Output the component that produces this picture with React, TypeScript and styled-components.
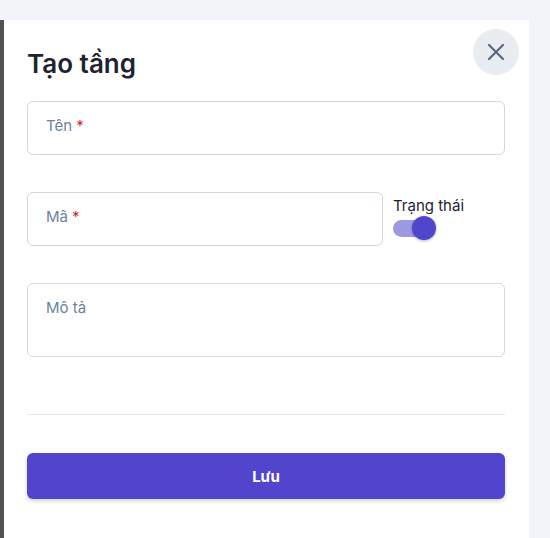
import React, { useState } from "react";
import styled, { createGlobalStyle } from "styled-components";

const GlobalStyle = createGlobalStyle`
  html, body {
    margin: 0;
    padding: 0;
    background: #f0f3f8;
    font-family: Inter, "Noto Sans", "Liberation Sans", sans-serif;
  }
`;

const Page = styled.div`
  display: flex;
  padding-top: 20px;
  height: 518px;
  overflow: hidden;
`;

const Backdrop = styled.div`
  width: 4px;
  flex-shrink: 0;
  background: #525252;
`;

const Panel = styled.div`
  position: relative;
  width: 525px;
  flex-shrink: 0;
  background: #ffffff;
  box-sizing: border-box;
  padding: 0 24px 0 23px;
`;

const Title = styled.h2`
  margin: 0;
  padding-top: 28px;
  font-size: 26px;
  line-height: 32px;
  font-weight: 600;
  color: #1d2333;
`;

const CloseButton = styled.button`
  position: absolute;
  top: 9px;
  right: 10px;
  width: 46px;
  height: 46px;
  border: none;
  border-radius: 50%;
  background: #e9edf2;
  display: flex;
  align-items: center;
  justify-content: center;
  padding: 0;
  cursor: pointer;
`;

const Form = styled.div`
  display: flex;
  flex-direction: column;
  margin-top: 21px;
`;

const Row = styled.div<{ $gap?: number }>`
  display: flex;
  align-items: flex-start;
  gap: 10px;
  margin-bottom: ${(p) => p.$gap ?? 37}px;
`;

const Field = styled.div<{ $height: number }>`
  flex: 1;
  height: ${(p) => p.$height}px;
  box-sizing: border-box;
  border: 1px solid #cfd8e3;
  border-radius: 6px;
  padding: 13px 18px 0;
`;

const Label = styled.span`
  font-size: 15px;
  line-height: 20px;
  color: #6a83a3;
`;

const Required = styled.span`
  color: #e02424;
  margin-left: 4px;
  font-weight: 400;
`;

const StatusBox = styled.div`
  width: 112px;
  display: flex;
  flex-direction: column;
  padding-top: 4px;
`;

const StatusLabel = styled.span`
  font-size: 15px;
  line-height: 20px;
  color: #1d2333;
`;

const Track = styled.div<{ $on: boolean }>`
  position: relative;
  width: 40px;
  height: 17px;
  margin-top: 4px;
  border-radius: 9px;
  background: ${(p) => (p.$on ? "#9f99e3" : "#cbd5e1")};
  cursor: pointer;
`;

const Knob = styled.div<{ $on: boolean }>`
  position: absolute;
  top: -4px;
  left: ${(p) => (p.$on ? "19px" : "-2px")};
  width: 24px;
  height: 24px;
  border-radius: 50%;
  background: ${(p) => (p.$on ? "#5046cd" : "#f8fafc")};
  box-shadow: 0 1px 3px rgba(0, 0, 0, 0.3);
`;

const Divider = styled.hr`
  margin: 57px 0 38px;
  border: none;
  border-top: 1px solid #e2e8f0;
`;

const SaveButton = styled.button`
  height: 46px;
  border: none;
  border-radius: 6px;
  background: #5145cd;
  color: #ffffff;
  font-family: inherit;
  font-size: 15px;
  font-weight: 700;
  box-shadow: 0 2px 4px rgba(0, 0, 0, 0.18);
  cursor: pointer;
`;

const App = () => {
  const [active, setActive] = useState(true);
  return (
    <>
      <GlobalStyle />
      <Page>
        <Backdrop />
        <Panel>
          <Title>Tạo tầng</Title>
          <CloseButton aria-label="Đóng">
            <svg width="20" height="20" viewBox="0 0 20 20" fill="none">
              <path
                d="M3 3L17 17M17 3L3 17"
                stroke="#5b6883"
                strokeWidth="2.2"
                strokeLinecap="round"
              />
            </svg>
          </CloseButton>
          <Form>
            <Row>
              <Field $height={54}>
                <Label>
                  Tên<Required>*</Required>
                </Label>
              </Field>
            </Row>
            <Row>
              <Field $height={54}>
                <Label>
                  Mã<Required>*</Required>
                </Label>
              </Field>
              <StatusBox>
                <StatusLabel>Trạng thái</StatusLabel>
                <Track $on={active} onClick={() => setActive(!active)}>
                  <Knob $on={active} />
                </Track>
              </StatusBox>
            </Row>
            <Row $gap={0}>
              <Field $height={74}>
                <Label>Mô tả</Label>
              </Field>
            </Row>
            <Divider />
            <SaveButton>Lưu</SaveButton>
          </Form>
        </Panel>
      </Page>
    </>
  );
};

export default App;
